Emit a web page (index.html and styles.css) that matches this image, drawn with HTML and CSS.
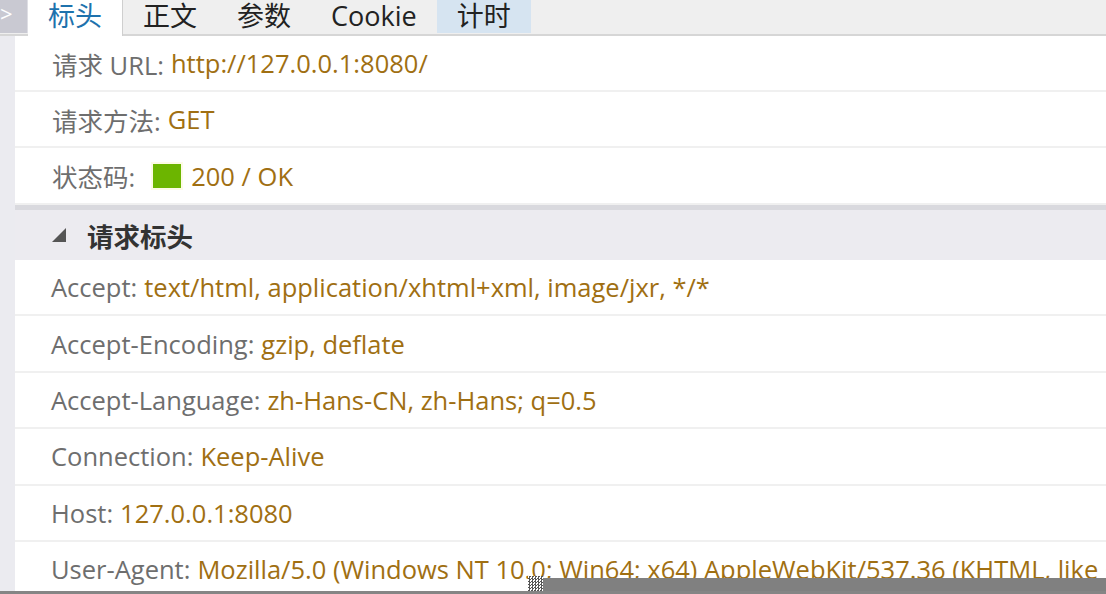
FILE: index.html
```html
<!DOCTYPE html>
<html lang="zh-CN">
  <head>
    <meta charset="UTF-8" />
    <title>标头</title>
    <link rel="stylesheet" href="styles.css">
  </head>
  <body>
    <div class="tabbar">
      <div class="toggle">&gt;</div>
      <div class="tab active">标头</div>
      <div class="tab">正文</div>
      <div class="tab">参数</div>
      <div class="tab">Cookie</div>
      <div class="tab hover">计时</div>
    </div>

    <div class="body">
      <div class="rail"></div>
      <div class="content">
        <div class="row"><span class="key">请求 URL:</span><span class="val">http://127.0.0.1:8080/</span></div>
        <div class="row"><span class="key">请求方法:</span><span class="val">GET</span></div>
        <div class="row"><span class="key">状态码:</span><span class="status"></span><span class="val">200 / OK</span></div>

        <div class="section"><span class="arrow"></span>请求标头</div>

        <div class="row hdr"><span class="key">Accept:</span><span class="val">text/html, application/xhtml+xml, image/jxr, */*</span></div>
        <div class="row hdr"><span class="key">Accept-Encoding:</span><span class="val">gzip, deflate</span></div>
        <div class="row hdr"><span class="key">Accept-Language:</span><span class="val">zh-Hans-CN, zh-Hans; q=0.5</span></div>
        <div class="row hdr"><span class="key">Connection:</span><span class="val">Keep-Alive</span></div>
        <div class="row hdr"><span class="key">Host:</span><span class="val">127.0.0.1:8080</span></div>
        <div class="row hdr"><span class="key">User-Agent:</span><span class="val">Mozilla/5.0 (Windows NT 10.0; Win64; x64) AppleWebKit/537.36 (KHTML, like Gecko)</span></div>
      </div>
    </div>

    <!-- bits of the desktop showing over the bottom edge -->
    <div class="grip"></div>
    <div class="taskbar"></div>
    <div class="edge"></div>
  </body>
</html>
```

FILE: styles.css
```css
* {
  box-sizing: border-box;
  margin: 0;
  padding: 0;
}

body {
  width: 1106px;
  height: 594px;
  overflow: hidden;
  background: #ffffff;
  font-family: "Open Sans", "Noto Sans CJK SC", sans-serif;
  font-size: 25.5px;
  position: relative;
}

/* tab strip */
.tabbar {
  display: flex;
  height: 36px;
  background: #efefef;
  border-bottom: 2px solid #d6d6d6;
}

.toggle {
  width: 28px;
  height: 33px;
  background: #c9c9d2;
  color: #ffffff;
  font-size: 22px;
  line-height: 26px;
  border-right: 1px solid #dedee4;
}

.tab {
  padding: 0 20px;
  line-height: 31px;
  color: #222222;
  font-size: 27px;
  white-space: nowrap;
}

.tab.active {
  background: #ffffff;
  color: #1e72ad;
  margin-bottom: -2px;
  border-right: 1px solid #cfcfcf;
}

.tab.hover {
  background: #d6e4f1;
  height: 33px;
}

/* panel */
.body {
  display: flex;
  height: 558px;
}

.rail {
  width: 15px;
  background: #ebebf0;
}

.content {
  flex: 1;
  overflow: hidden;
}

.row {
  display: flex;
  align-items: center;
  height: 56px;
  padding-left: 37px;
  border-bottom: 2px solid #f0f0f0;
  white-space: nowrap;
}

.row:nth-child(3) {
  height: 57px;
}

.row.hdr {
  padding-left: 36px;
  height: 56.4px;
}

.key {
  color: #6e6e6e;
  margin-right: 7px;
}

.val {
  color: #a06f12;
}

.status {
  width: 28px;
  height: 24px;
  background: #6cb500;
  box-shadow: 0 0 0 2px #fdfbe6;
  margin: 0 10px 0 11px;
}

.section {
  display: flex;
  align-items: center;
  height: 55px;
  padding-left: 37px;
  background: #ecebf0;
  border-top: 5px solid #d9d9de;
  color: #333333;
  font-size: 26.5px;
  font-weight: bold;
}

.arrow {
  width: 0;
  height: 0;
  border-left: 14px solid transparent;
  border-bottom: 14px solid #555555;
  margin-right: 21px;
}

/* desktop bits over the bottom */
.taskbar {
  position: absolute;
  left: 543px;
  right: 0;
  top: 578px;
  bottom: 0;
  background: #808080;
}

.edge {
  position: absolute;
  left: 0;
  right: 0;
  top: 591px;
  height: 3px;
  background: #858585;
}

.grip {
  position: absolute;
  left: 528px;
  top: 576px;
  width: 15px;
  height: 15px;
  background: repeating-conic-gradient(#555555 0 25%, #ffffff 0 50%) 0 0 / 3px 3px;
}
```
